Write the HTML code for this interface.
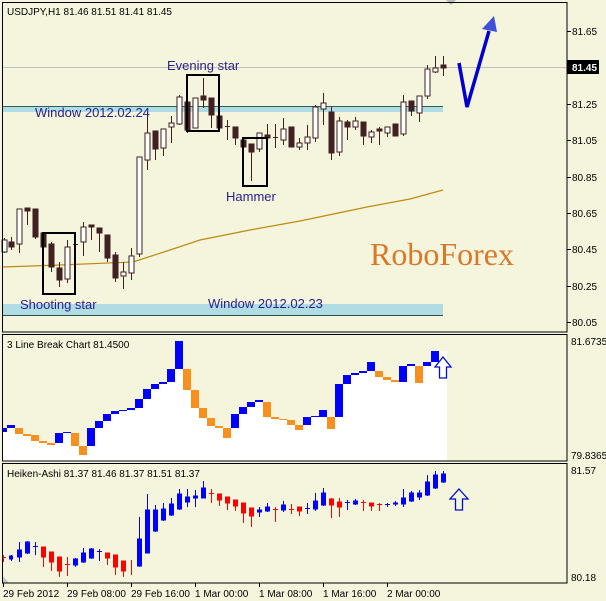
<!DOCTYPE html>
<html><head><meta charset="utf-8"><style>
html,body{margin:0;padding:0;background:#f5f4dc;width:606px;height:601px;overflow:hidden}
svg{display:block}
text{font-family:"Liberation Sans","DejaVu Sans",sans-serif}
</style></head><body>
<svg width="606" height="601" viewBox="0 0 606 601" xmlns="http://www.w3.org/2000/svg">
<rect width="606" height="601" fill="#f5f4dc"/>
<line x1="2" y1="67.5" x2="567" y2="67.5" stroke="#c0c0c0"/>
<rect x="2" y="107" width="441" height="5" fill="#b0dde4"/>
<line x1="2" y1="106.5" x2="443" y2="106.5" stroke="#2f5f5f"/>
<rect x="2" y="304" width="441" height="11" fill="#b0dde4"/>
<line x1="2" y1="315.5" x2="443" y2="315.5" stroke="#2f4f4f"/>
<polyline points="2,267 60,265 133,262 170,250 200,240 250,230 300,221 367,207 410,199 443,190" fill="none" stroke="#c08a10" stroke-width="1.2"/>
<g stroke="#402020" stroke-width="1" shape-rendering="crispEdges">
<line x1="4.5" y1="238" x2="4.5" y2="253"/><rect x="2" y="240" width="5" height="12" fill="#fff"/>
<line x1="11.5" y1="237" x2="11.5" y2="250"/><rect x="9" y="242" width="5" height="5" fill="#402020"/>
<line x1="19.5" y1="209" x2="19.5" y2="253"/><rect x="17" y="209" width="5" height="35" fill="#fff"/>
<line x1="27.5" y1="208" x2="27.5" y2="225"/><rect x="25" y="208" width="5" height="3" fill="#402020"/>
<line x1="35.5" y1="209" x2="35.5" y2="239"/><rect x="33" y="209" width="5" height="28" fill="#402020"/>
<line x1="43.5" y1="233" x2="43.5" y2="247"/><rect x="41" y="233" width="5" height="14" fill="#402020"/>
<line x1="51.5" y1="242" x2="51.5" y2="272"/><rect x="49" y="244" width="5" height="23" fill="#402020"/>
<line x1="59.5" y1="262" x2="59.5" y2="287"/><rect x="57" y="268" width="5" height="12" fill="#402020"/>
<line x1="67.5" y1="240" x2="67.5" y2="283"/><rect x="65" y="247" width="5" height="32" fill="#fff"/>
<line x1="73" y1="244.5" x2="78" y2="244.5"/>
<line x1="83.5" y1="222" x2="83.5" y2="256"/><rect x="81" y="227" width="5" height="15" fill="#fff"/>
<line x1="91.5" y1="225" x2="91.5" y2="240"/><rect x="89" y="225" width="5" height="2" fill="#402020"/>
<line x1="99.5" y1="228" x2="99.5" y2="252"/><rect x="97" y="228" width="5" height="5" fill="#402020"/>
<line x1="107.5" y1="235" x2="107.5" y2="262"/><rect x="105" y="235" width="5" height="23" fill="#402020"/>
<line x1="115.5" y1="252" x2="115.5" y2="282"/><rect x="113" y="255" width="5" height="23" fill="#402020"/>
<line x1="123.5" y1="262" x2="123.5" y2="289"/><rect x="121" y="272" width="5" height="4" fill="#fff"/>
<line x1="131.5" y1="248" x2="131.5" y2="280"/><rect x="129" y="256" width="5" height="17" fill="#fff"/>
<line x1="139.5" y1="157" x2="139.5" y2="257"/><rect x="137" y="157" width="5" height="97" fill="#fff"/>
<line x1="147.5" y1="112" x2="147.5" y2="170"/><rect x="145" y="133" width="5" height="27" fill="#fff"/>
<line x1="155.5" y1="131" x2="155.5" y2="160"/><rect x="153" y="131" width="5" height="18" fill="#402020"/>
<line x1="163.5" y1="129" x2="163.5" y2="156"/><rect x="161" y="129" width="5" height="19" fill="#fff"/>
<line x1="171.5" y1="116" x2="171.5" y2="143"/><rect x="169" y="123" width="5" height="4" fill="#fff"/>
<line x1="179.5" y1="95" x2="179.5" y2="125"/><rect x="177" y="97" width="5" height="27" fill="#fff"/>
<line x1="187.5" y1="102" x2="187.5" y2="133"/><rect x="185" y="102" width="5" height="28" fill="#402020"/>
<line x1="195.5" y1="98" x2="195.5" y2="128"/><rect x="193" y="98" width="5" height="30" fill="#fff"/>
<line x1="203.5" y1="78" x2="203.5" y2="108"/><rect x="201" y="96" width="5" height="4" fill="#402020"/>
<line x1="211.5" y1="98" x2="211.5" y2="128"/><rect x="209" y="98" width="5" height="17" fill="#402020"/>
<line x1="219.5" y1="116" x2="219.5" y2="130"/><rect x="217" y="116" width="5" height="12" fill="#402020"/>
<line x1="227.5" y1="120" x2="227.5" y2="140"/><line x1="225" y1="126.5" x2="230" y2="126.5"/>
<line x1="235.5" y1="127" x2="235.5" y2="145"/><rect x="233" y="127" width="5" height="11" fill="#402020"/>
<line x1="243.5" y1="140" x2="243.5" y2="147"/><rect x="241" y="140" width="5" height="7" fill="#402020"/>
<line x1="251.5" y1="144" x2="251.5" y2="181"/><rect x="249" y="144" width="5" height="8" fill="#402020"/>
<line x1="259.5" y1="133" x2="259.5" y2="152"/><rect x="257" y="133" width="5" height="16" fill="#fff"/>
<line x1="267.5" y1="124" x2="267.5" y2="167"/><rect x="265" y="135" width="5" height="3" fill="#402020"/>
<line x1="275.5" y1="124" x2="275.5" y2="148"/><line x1="273" y1="137.5" x2="278" y2="137.5"/>
<line x1="283.5" y1="118" x2="283.5" y2="145"/><rect x="281" y="129" width="5" height="11" fill="#fff"/>
<line x1="291.5" y1="127" x2="291.5" y2="147"/><rect x="289" y="127" width="5" height="20" fill="#402020"/>
<line x1="299.5" y1="138" x2="299.5" y2="150"/><rect x="297" y="143" width="5" height="4" fill="#fff"/>
<line x1="307.5" y1="125" x2="307.5" y2="150"/><rect x="305" y="137" width="5" height="6" fill="#fff"/>
<line x1="315.5" y1="105" x2="315.5" y2="142"/><rect x="313" y="107" width="5" height="31" fill="#fff"/>
<line x1="323.5" y1="93" x2="323.5" y2="125"/><rect x="321" y="103" width="5" height="6" fill="#fff"/>
<line x1="331.5" y1="107" x2="331.5" y2="160"/><rect x="329" y="112" width="5" height="41" fill="#402020"/>
<line x1="339.5" y1="117" x2="339.5" y2="156"/><rect x="337" y="121" width="5" height="31" fill="#fff"/>
<line x1="347.5" y1="120" x2="347.5" y2="140"/><rect x="345" y="122" width="5" height="5" fill="#402020"/>
<line x1="355.5" y1="117" x2="355.5" y2="130"/><rect x="353" y="121" width="5" height="6" fill="#fff"/>
<line x1="363.5" y1="122" x2="363.5" y2="145"/><rect x="361" y="122" width="5" height="14" fill="#402020"/>
<line x1="371.5" y1="130" x2="371.5" y2="143"/><rect x="369" y="132" width="5" height="5" fill="#fff"/>
<line x1="379.5" y1="127" x2="379.5" y2="145"/><rect x="377" y="129" width="5" height="2" fill="#402020"/>
<line x1="387.5" y1="127" x2="387.5" y2="137"/><rect x="385" y="127" width="5" height="6" fill="#fff"/>
<line x1="395.5" y1="124" x2="395.5" y2="136"/><rect x="393" y="124" width="5" height="12" fill="#402020"/>
<line x1="403.5" y1="95" x2="403.5" y2="136"/><rect x="401" y="102" width="5" height="32" fill="#fff"/>
<line x1="411.5" y1="101" x2="411.5" y2="116"/><rect x="409" y="101" width="5" height="10" fill="#402020"/>
<line x1="419.5" y1="96" x2="419.5" y2="122"/><rect x="417" y="96" width="5" height="17" fill="#fff"/>
<line x1="427.5" y1="65" x2="427.5" y2="99"/><rect x="425" y="69" width="5" height="27" fill="#fff"/>
<line x1="435.5" y1="56" x2="435.5" y2="73"/><rect x="433" y="68" width="5" height="4" fill="#fff"/>
<line x1="443.5" y1="56" x2="443.5" y2="76"/><rect x="441" y="65" width="5" height="3" fill="#402020"/>
</g>
<g fill="none" stroke="#000" stroke-width="2">
<rect x="187" y="75" width="32" height="56"/>
<rect x="243" y="138" width="24" height="48"/>
<rect x="43" y="233" width="32" height="61"/>
</g>
<g font-size="13" fill="#2a1e8c">
<text x="167" y="70">Evening star</text>
<text x="35" y="117">Window 2012.02.24</text>
<text x="226" y="201">Hammer</text>
<text x="20" y="309">Shooting star</text>
<text x="208" y="308">Window  2012.02.23</text>
</g>
<text x="7" y="15" font-size="10" fill="#000">USDJPY,H1  81.46 81.51 81.41 81.45</text>
<text x="370" y="265" font-size="32" fill="#d8782a" style="font-family:'Liberation Serif',serif">RoboForex</text>
<polyline points="459,63 467,107 489,31" fill="none" stroke="#0000d0" stroke-width="3.5" stroke-linejoin="miter"/>
<polygon points="494,16 482,29 497,32" fill="#4050d8"/>
<polygon points="446,0 456,0 451,5" fill="#bbb"/>
<rect x="567" y="60" width="32" height="14" fill="#000"/>
<g font-size="10" fill="#000">
<text x="572" y="35">81.65</text>
<text x="572" y="71" fill="#fff" font-weight="bold">81.45</text>
<text x="572" y="108">81.25</text>
<text x="572" y="144">81.05</text>
<text x="572" y="181">80.85</text>
<text x="572" y="217">80.65</text>
<text x="572" y="253">80.45</text>
<text x="572" y="290">80.25</text>
<text x="572" y="326">80.05</text>
</g>
<g stroke="#000" shape-rendering="crispEdges">
<line x1="567" y1="31.5" x2="571" y2="31.5"/><line x1="567" y1="104.5" x2="571" y2="104.5"/><line x1="567" y1="140.5" x2="571" y2="140.5"/><line x1="567" y1="177.5" x2="571" y2="177.5"/><line x1="567" y1="213.5" x2="571" y2="213.5"/><line x1="567" y1="249.5" x2="571" y2="249.5"/><line x1="567" y1="286.5" x2="571" y2="286.5"/><line x1="567" y1="322.5" x2="571" y2="322.5"/>
</g>
<rect x="2.5" y="2.5" width="564.5" height="329.5" fill="none" stroke="#000" shape-rendering="crispEdges"/>
<path fill="#fff" d="M2 461 L2 428 H7 V425 H15 V428 H23 V434 H31 V435 H39 V441 H47 V443 H55 V433 H63 V432 H71 V433 H79 V446 H87 V428 H95 V421 H103 V414 H111 V411 H119 V410 H127 V408 H135 V399 H143 V389 H151 V384 H159 V382 H167 V369 H175 V341 H183 V369 H191 V390 H199 V408 H207 V418 H215 V426 H223 V428 H231 V414 H239 V407 H247 V402 H255 V400 H263 V402 H271 V417 H279 V419 H287 V420 H295 V425 H303 V417 H311 V416 H319 V410 H327 V417 H335 V384 H343 V375 H351 V373 H359 V371 H367 V362 H375 V371 H383 V377 H391 V380 H399 V366 H407 V364 H415 V366 H423 V362 H431 V351 H447 V461 Z"/>
<g shape-rendering="crispEdges">
<g fill="#0000ff">
<rect x="3" y="428" width="4" height="4"/><rect x="7" y="425" width="8" height="3"/>
<rect x="55" y="433" width="8" height="10"/><rect x="63" y="432" width="8" height="1"/>
<rect x="87" y="428" width="8" height="18"/><rect x="95" y="421" width="8" height="7"/><rect x="103" y="414" width="8" height="7"/><rect x="111" y="411" width="8" height="3"/><rect x="119" y="410" width="8" height="1"/><rect x="127" y="408" width="8" height="2"/><rect x="135" y="399" width="8" height="9"/><rect x="143" y="389" width="8" height="10"/><rect x="151" y="384" width="8" height="5"/><rect x="159" y="382" width="8" height="2"/><rect x="167" y="369" width="8" height="13"/><rect x="175" y="341" width="8" height="28"/>
<rect x="231" y="414" width="8" height="14"/><rect x="239" y="407" width="8" height="7"/><rect x="247" y="402" width="8" height="5"/><rect x="255" y="400" width="8" height="2"/>
<rect x="303" y="417" width="8" height="8"/><rect x="311" y="416" width="8" height="1"/><rect x="319" y="410" width="8" height="7"/>
<rect x="335" y="384" width="8" height="33"/><rect x="343" y="375" width="8" height="9"/><rect x="351" y="373" width="8" height="2"/><rect x="359" y="371" width="8" height="2"/><rect x="367" y="362" width="8" height="9"/>
<rect x="399" y="366" width="8" height="16"/><rect x="407" y="364" width="8" height="2"/><rect x="423" y="362" width="8" height="4"/><rect x="431" y="351" width="8" height="11"/>
</g>
<g fill="#f7901e">
<rect x="15" y="428" width="8" height="6"/><rect x="23" y="434" width="8" height="2"/><rect x="31" y="435" width="8" height="6"/><rect x="39" y="441" width="8" height="2"/><rect x="47" y="443" width="8" height="2"/>
<rect x="71" y="433" width="8" height="13"/><rect x="79" y="446" width="8" height="9"/>
<rect x="183" y="369" width="8" height="21"/><rect x="191" y="390" width="8" height="18"/><rect x="199" y="408" width="8" height="10"/><rect x="207" y="418" width="8" height="8"/><rect x="215" y="426" width="8" height="2"/><rect x="223" y="428" width="8" height="10"/>
<rect x="263" y="402" width="8" height="15"/><rect x="271" y="417" width="8" height="2"/><rect x="279" y="419" width="8" height="1"/><rect x="287" y="420" width="8" height="5"/><rect x="295" y="425" width="8" height="5"/>
<rect x="327" y="417" width="8" height="12"/>
<rect x="375" y="371" width="8" height="6"/><rect x="383" y="377" width="8" height="3"/><rect x="391" y="380" width="8" height="2"/><rect x="415" y="366" width="8" height="17"/>
</g>
</g>
<polygon points="443,357 451,367 446.5,367 446.5,378 439.5,378 439.5,367 435,367" fill="#fff" stroke="#0010c0" stroke-width="1.3"/>
<text x="7" y="348" font-size="10" fill="#000">3 Line Break Chart 81.4500</text>
<text x="571" y="345" font-size="10" fill="#000">81.6735</text>
<text x="571" y="459" font-size="10" fill="#000">79.8365</text>
<rect x="2.5" y="334.5" width="564.5" height="126.5" fill="none" stroke="#000" shape-rendering="crispEdges"/>
<g shape-rendering="crispEdges" stroke-width="1">
<g stroke="#0000ff" fill="#0000ff">
<line x1="11.5" y1="555" x2="11.5" y2="561"/><rect x="9.5" y="556" width="3" height="3"/>
<line x1="19.5" y1="542" x2="19.5" y2="562"/><rect x="17.5" y="550" width="4" height="7"/>
<line x1="27.5" y1="541" x2="27.5" y2="554"/><rect x="25.5" y="542" width="4" height="11"/>
<line x1="35.5" y1="542" x2="35.5" y2="555"/><line x1="33" y1="546.5" x2="38" y2="546.5"/>
<line x1="75.5" y1="558" x2="75.5" y2="567"/><rect x="73.5" y="559" width="4" height="6"/>
<line x1="83.5" y1="548" x2="83.5" y2="563"/><rect x="81.5" y="553" width="4" height="9"/>
<line x1="91.5" y1="548" x2="91.5" y2="559"/><rect x="89.5" y="549" width="4" height="9"/>
<line x1="99.5" y1="549" x2="99.5" y2="561"/><line x1="97" y1="551.5" x2="102" y2="551.5"/>
<line x1="139.5" y1="517" x2="139.5" y2="567"/><rect x="137.5" y="539" width="4" height="27"/>
<line x1="147.5" y1="494" x2="147.5" y2="553"/><rect x="145.5" y="510" width="4" height="43"/>
<line x1="155.5" y1="505" x2="155.5" y2="532"/><rect x="153.5" y="510" width="4" height="21"/>
<line x1="163.5" y1="503" x2="163.5" y2="521"/><rect x="161.5" y="509" width="4" height="11"/>
<line x1="171.5" y1="498" x2="171.5" y2="516"/><rect x="169.5" y="504" width="4" height="11"/>
<line x1="179.5" y1="489" x2="179.5" y2="510"/><rect x="177.5" y="494" width="4" height="15"/>
<line x1="187.5" y1="489" x2="187.5" y2="507"/><rect x="185.5" y="497" width="4" height="5"/>
<line x1="195.5" y1="490" x2="195.5" y2="507"/><rect x="193.5" y="496" width="4" height="2"/>
<line x1="203.5" y1="481" x2="203.5" y2="498"/><rect x="201.5" y="488" width="4" height="10"/>
<line x1="259.5" y1="507" x2="259.5" y2="517"/><rect x="257.5" y="510" width="4" height="2"/>
<line x1="267.5" y1="503" x2="267.5" y2="512"/><rect x="265.5" y="507" width="4" height="4"/>
<line x1="283.5" y1="501" x2="283.5" y2="512"/><rect x="281.5" y="505" width="4" height="5"/>
<line x1="307.5" y1="503" x2="307.5" y2="514"/><line x1="305" y1="508.5" x2="310" y2="508.5"/>
<line x1="315.5" y1="493" x2="315.5" y2="511"/><rect x="313.5" y="501" width="4" height="8"/>
<line x1="323.5" y1="488" x2="323.5" y2="506"/><rect x="321.5" y="493" width="4" height="12"/>
<line x1="347.5" y1="500" x2="347.5" y2="510"/><line x1="345" y1="502.5" x2="350" y2="502.5"/>
<line x1="355.5" y1="499" x2="355.5" y2="505"/><rect x="353.5" y="501" width="4" height="3"/>
<line x1="387.5" y1="503" x2="387.5" y2="507"/><line x1="385" y1="504.5" x2="390" y2="504.5"/>
<line x1="395.5" y1="501" x2="395.5" y2="506"/><rect x="393.5" y="503" width="4" height="1"/>
<line x1="403.5" y1="489" x2="403.5" y2="507"/><rect x="401.5" y="498" width="4" height="6"/>
<line x1="411.5" y1="491" x2="411.5" y2="502"/><rect x="409.5" y="493" width="4" height="8"/>
<line x1="419.5" y1="490" x2="419.5" y2="500"/><rect x="417.5" y="493" width="4" height="4"/>
<line x1="427.5" y1="475" x2="427.5" y2="496"/><rect x="425.5" y="482" width="4" height="13"/>
<line x1="435.5" y1="471" x2="435.5" y2="489"/><rect x="433.5" y="475" width="4" height="13"/>
<line x1="443.5" y1="471" x2="443.5" y2="483"/><rect x="441.5" y="474" width="4" height="8"/>
</g>
<g stroke="#ff0000" fill="#ff0000">
<line x1="3.5" y1="555" x2="3.5" y2="562"/><line x1="2" y1="557.5" x2="6" y2="557.5"/>
<line x1="43.5" y1="547" x2="43.5" y2="567"/><rect x="41.5" y="547" width="4" height="10"/>
<line x1="51.5" y1="552" x2="51.5" y2="571"/><rect x="49.5" y="552" width="4" height="10"/>
<line x1="59.5" y1="557" x2="59.5" y2="577"/><rect x="57.5" y="557" width="4" height="14"/>
<line x1="67.5" y1="557" x2="67.5" y2="576"/><line x1="65" y1="564.5" x2="70" y2="564.5"/>
<line x1="107.5" y1="553" x2="107.5" y2="565"/><rect x="105.5" y="553" width="4" height="5"/>
<line x1="115.5" y1="555" x2="115.5" y2="575"/><rect x="113.5" y="555" width="4" height="12"/>
<line x1="123.5" y1="561" x2="123.5" y2="577"/><rect x="121.5" y="561" width="4" height="10"/>
<line x1="131.5" y1="560" x2="131.5" y2="575"/>
<line x1="211.5" y1="489" x2="211.5" y2="503"/><line x1="209" y1="493.5" x2="214" y2="493.5"/>
<line x1="219.5" y1="494" x2="219.5" y2="506"/><rect x="217.5" y="494" width="4" height="6"/>
<line x1="227.5" y1="497" x2="227.5" y2="510"/><rect x="225.5" y="497" width="4" height="6"/>
<line x1="235.5" y1="500" x2="235.5" y2="511"/><rect x="233.5" y="500" width="4" height="6"/>
<line x1="243.5" y1="503" x2="243.5" y2="523"/><rect x="241.5" y="503" width="4" height="10"/>
<line x1="251.5" y1="508" x2="251.5" y2="527"/><rect x="249.5" y="508" width="4" height="8"/>
<line x1="275.5" y1="507" x2="275.5" y2="522"/><line x1="273" y1="509.5" x2="278" y2="509.5"/>
<line x1="291.5" y1="504" x2="291.5" y2="514"/><line x1="289" y1="509.5" x2="294" y2="509.5"/>
<line x1="299.5" y1="507" x2="299.5" y2="516"/><rect x="297.5" y="507" width="4" height="4"/>
<line x1="331.5" y1="498" x2="331.5" y2="518"/><rect x="329.5" y="499" width="4" height="6"/>
<line x1="339.5" y1="498" x2="339.5" y2="517"/><rect x="337.5" y="502" width="4" height="5"/>
<line x1="363.5" y1="500" x2="363.5" y2="511"/><line x1="361" y1="502.5" x2="366" y2="502.5"/>
<line x1="371.5" y1="503" x2="371.5" y2="511"/><rect x="369.5" y="503" width="4" height="3"/>
<line x1="379.5" y1="503" x2="379.5" y2="511"/><line x1="377" y1="504.5" x2="382" y2="504.5"/>
</g>
</g>
<polygon points="459,489 468,499 462.5,499 462.5,510 455.5,510 455.5,499 450,499" fill="#f5f4dc" stroke="#0010c0" stroke-width="1.3"/>
<text x="7" y="477" font-size="10" fill="#000">Heiken-Ashi 81.37 81.46 81.37 81.51 81.37</text>
<text x="571" y="474" font-size="10" fill="#000">81.57</text>
<text x="571" y="581" font-size="10" fill="#000">80.18</text>
<polygon points="3,576 3,583 9,583" fill="#c8c8c8"/>
<rect x="2.5" y="463.5" width="564.5" height="119.5" fill="none" stroke="#000" shape-rendering="crispEdges"/>
<g stroke="#000" shape-rendering="crispEdges">
<line x1="3.5" y1="583" x2="3.5" y2="587"/><line x1="67.5" y1="583" x2="67.5" y2="587"/><line x1="131.5" y1="583" x2="131.5" y2="587"/><line x1="195.5" y1="583" x2="195.5" y2="587"/><line x1="259.5" y1="583" x2="259.5" y2="587"/><line x1="323.5" y1="583" x2="323.5" y2="587"/><line x1="387.5" y1="583" x2="387.5" y2="587"/>
</g>
<g font-size="10" fill="#000">
<text x="3" y="597">29 Feb 2012</text>
<text x="67" y="597">29 Feb 08:00</text>
<text x="131" y="597">29 Feb 16:00</text>
<text x="195" y="597">1 Mar 00:00</text>
<text x="259" y="597">1 Mar 08:00</text>
<text x="323" y="597">1 Mar 16:00</text>
<text x="387" y="597">2 Mar 00:00</text>
</g>
</svg>
</body></html>
